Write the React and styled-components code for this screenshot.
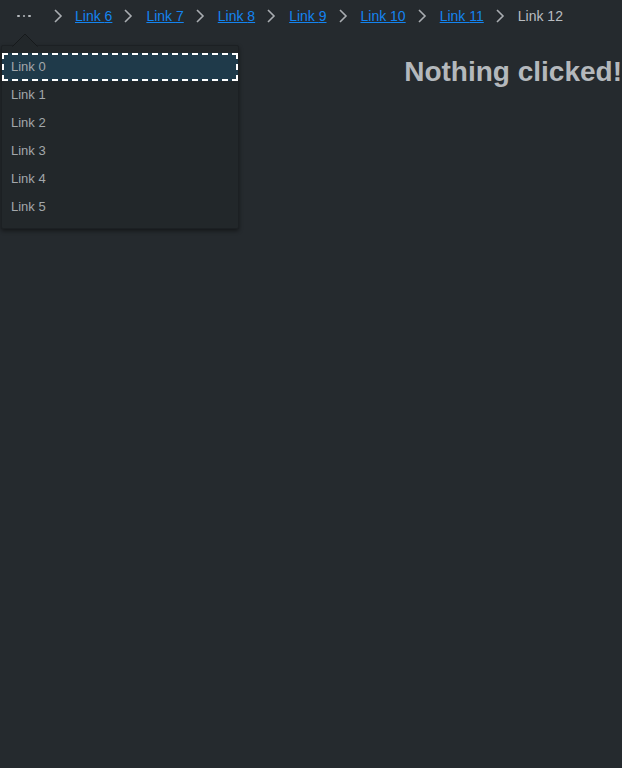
import React from "react";
import styled, { createGlobalStyle } from "styled-components";

const Global = createGlobalStyle`
  html, body { margin: 0; padding: 0; background: #252a2e; }
  body { font-family: "Liberation Sans", Arial, sans-serif; min-height: 768px; }
`;

const Page = styled.div`
  position: relative;
  height: 768px;
  background: #252a2e;
`;

const Nav = styled.nav`
  display: flex;
  align-items: center;
  height: 32px;
  padding-left: 8px;
  font-size: 14px;
`;

const MoreButton = styled.button`
  position: relative;
  width: 32px;
  height: 32px;
  display: flex;
  align-items: center;
  justify-content: center;
  gap: 3px;
  background: none;
  border: none;
  padding: 0;
  cursor: pointer;
`;

const Dot = styled.span`
  width: 2.5px;
  height: 2.5px;
  border-radius: 50%;
  background: #b6babe;
`;

const Sep = styled.span`
  display: flex;
  align-items: center;
  justify-content: center;
  width: 10px;
  margin: 0 ${(p) => (p.$first ? "12px 0 13px" : "13px 0 11px")};
  color: #a9adb1;
`;

const Crumb = styled.a`
  color: #1484f0;
  text-decoration: underline;
  cursor: pointer;
`;

const Current = styled.span`
  color: #b9bdc1;
`;

const Heading = styled.h2`
  margin: 24px 0 0;
  text-align: right;
  font-size: 28px;
  font-weight: 700;
  color: #b4b8bc;
  line-height: 32px;
`;

const Popover = styled.div`
  position: absolute;
  left: 1px;
  top: 45px;
  width: 236px;
  padding: 7px 0;
  background: #22272a;
  border: 1px solid #1c2023;
  border-radius: 2px;
  box-shadow: 0 2px 4px rgba(0, 0, 0, 0.45);
`;

const Arrow = styled.svg`
  position: absolute;
  left: 10px;
  top: -13px;
`;

const Item = styled.div`
  height: 28px;
  display: flex;
  align-items: center;
  padding: 0 0 1px 9px;
  font-size: 13px;
  color: #a3a7ab;
  box-sizing: border-box;
  background: ${(p) => (p.$active ? "#1f3a4a" : "transparent")};
  outline: ${(p) => (p.$active ? "2px dashed #ffffff" : "none")};
  outline-offset: -2px;
`;

const Chevron = () => (
  <svg width="10" height="14" viewBox="0 0 10 14" fill="none">
    <path d="M2 1 L8 7 L2 13" stroke="currentColor" strokeWidth="1.6" />
  </svg>
);

export default function App() {
  const links = [6, 7, 8, 9, 10, 11];
  return (
    <Page>
      <Global />
      <Nav>
        <MoreButton aria-label="more">
          <Dot />
          <Dot />
          <Dot />
        </MoreButton>
        {links.map((n) => (
          <React.Fragment key={n}>
            <Sep $first={n === 6}>
              <Chevron />
            </Sep>
            <Crumb>Link {n}</Crumb>
          </React.Fragment>
        ))}
        <Sep>
          <Chevron />
        </Sep>
        <Current>Link 12</Current>
      </Nav>
      <Heading>Nothing clicked!</Heading>
      <Popover>
        <Arrow width="26" height="14" viewBox="0 0 26 14">
          <path d="M0 14 L13 1 L26 14 Z" fill="#22272a" />
          <path d="M0.5 13.5 L13 1 L25.5 13.5" stroke="#16191b" fill="none" />
        </Arrow>
        {[0, 1, 2, 3, 4, 5].map((i) => (
          <Item key={i} $active={i === 0}>
            Link {i}
          </Item>
        ))}
      </Popover>
    </Page>
  );
}
